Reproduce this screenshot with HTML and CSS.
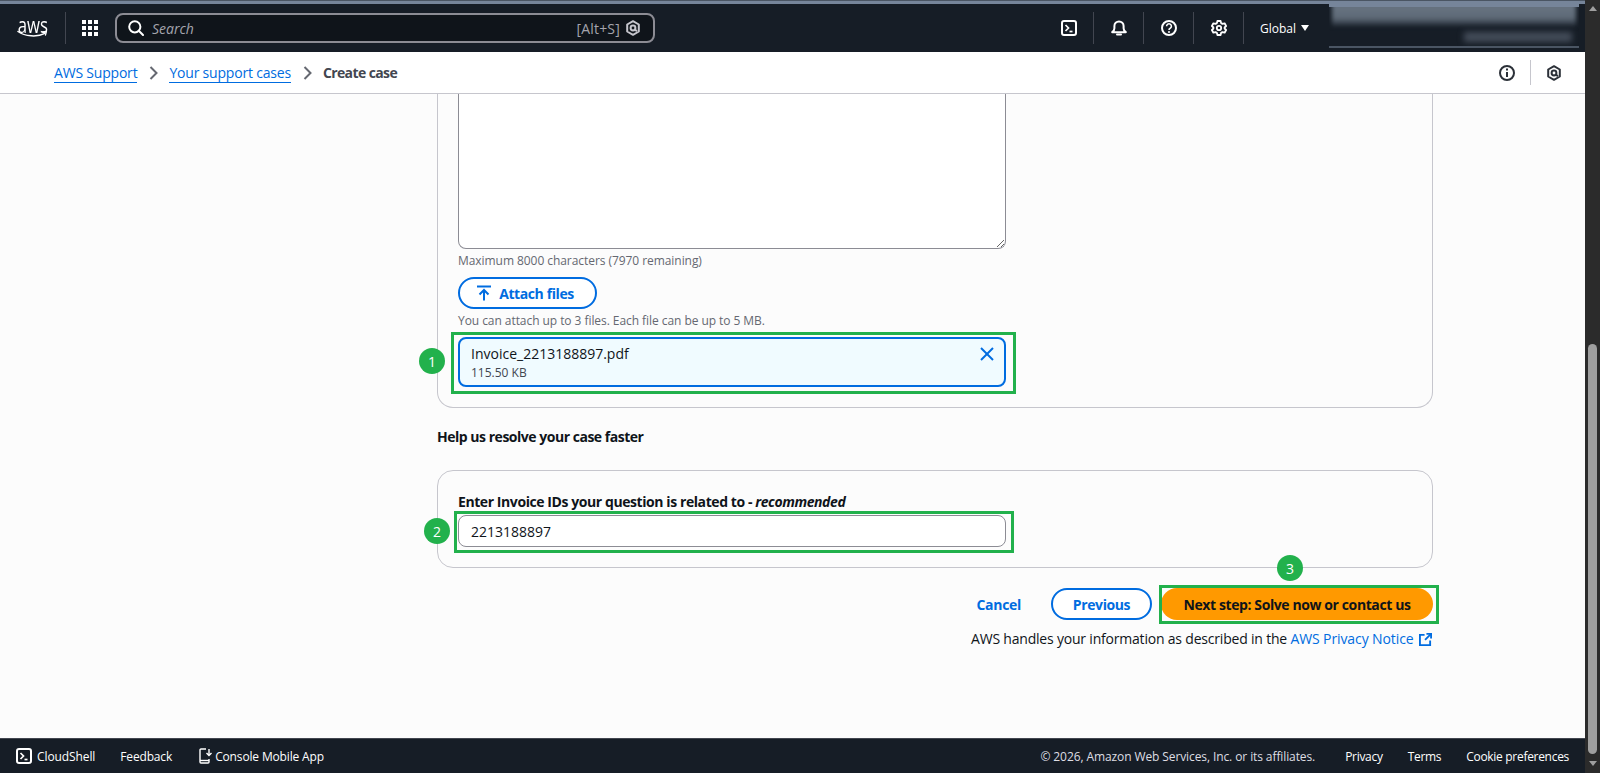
FILE: index.html
```html
<!DOCTYPE html>
<html lang="en">

<head>
    <meta charset="UTF-8">
    <meta name="viewport" content="width=device-width, initial-scale=1.0">
    <title>Create case</title>
    <link rel="stylesheet" href="styles.css">
</head>

<body>
    <div class="window">
        <div class="page">
            <div class="strip"></div>

            <header class="nav">
                <div class="logo">
                    <span class="logo-text">aws</span>
                    <svg class="logo-smile" width="32" height="9" viewBox="0 0 32 9" fill="none">
                        <path d="M1 1.5C8 6.5 20 7.5 28 3.4" stroke="#fff" stroke-width="1.5" stroke-linecap="round"/>
                        <path d="M25.5 1.8l4-.4-1 3.8" stroke="#fff" stroke-width="1.2" stroke-linecap="round" stroke-linejoin="round"/>
                    </svg>
                </div>
                <span class="nav-sep first"></span>
                <svg class="apps" width="16" height="16" viewBox="0 0 16 16" fill="#fff">
                    <rect x="0" y="0" width="4" height="4"/><rect x="6" y="0" width="4" height="4"/><rect x="12" y="0" width="4" height="4"/>
                    <rect x="0" y="6" width="4" height="4"/><rect x="6" y="6" width="4" height="4"/><rect x="12" y="6" width="4" height="4"/>
                    <rect x="0" y="12" width="4" height="4"/><rect x="6" y="12" width="4" height="4"/><rect x="12" y="12" width="4" height="4"/>
                </svg>
                <div class="search">
                    <svg width="16" height="16" viewBox="0 0 16 16" fill="none" stroke="#fff" stroke-width="2">
                        <circle cx="6.8" cy="6.8" r="5.6"/><path d="M10.8 10.8L15 15" stroke-linecap="round"/>
                    </svg>
                    <span class="search-text">Search</span>
                    <span class="search-key">[Alt+S]</span>
                    <svg width="14" height="16" viewBox="0 0 14 16" fill="none" stroke="#c6c6cd" stroke-width="2">
                        <path d="M7 1.2l5.8 3.3v7L7 14.8l-5.8-3.3v-7z" stroke-linejoin="round"/>
                        <circle cx="7" cy="8" r="2.4"/><path d="M8.5 9.5l2.5 1.7"/>
                    </svg>
                </div>
                <div class="nav-tools">
                    <span class="tool">
                        <svg width="16" height="16" viewBox="0 0 16 16" fill="none" stroke="#fff" stroke-width="2">
                            <rect x="1" y="1" width="14" height="14" rx="2"/><path d="M4.5 5l3 3-3 3" stroke-width="1.7"/><path d="M8.5 11.5h3" stroke-width="1.7"/>
                        </svg>
                    </span>
                    <span class="nav-sep"></span>
                    <span class="tool">
                        <svg width="16" height="16" viewBox="0 0 16 16" fill="none" stroke="#fff" stroke-width="2" stroke-linejoin="round">
                            <path d="M1.2 12.2c1.5-1 2.2-2 2.2-4V6a4.6 4.6 0 0 1 9.2 0v2.2c0 2 .7 3 2.2 4z"/><path d="M6 14.6h4" stroke-linecap="round"/>
                        </svg>
                    </span>
                    <span class="nav-sep"></span>
                    <span class="tool">
                        <svg width="16" height="16" viewBox="0 0 16 16" fill="none" stroke="#fff" stroke-width="2">
                            <circle cx="8" cy="8" r="7"/><path d="M5.6 6.2a2.4 2.4 0 1 1 3.6 2.1c-.8.4-1.2.9-1.2 1.7" stroke-width="1.6"/><circle cx="8" cy="12" r=".7" stroke-width="1"/>
                        </svg>
                    </span>
                    <span class="nav-sep"></span>
                    <span class="tool">
                        <svg width="16" height="16" viewBox="0 0 16 16" fill="none" stroke="#fff" stroke-width="1.8" stroke-linejoin="round">
                            <path d="M6.4 1h3.2l.5 2.1 1.4.8 2.1-.6 1.5 2.7-1.5 1.5v1l1.5 1.5-1.5 2.7-2.1-.6-1.4.8-.5 2.1H6.4l-.5-2.1-1.4-.8-2.1.6-1.5-2.7 1.5-1.5v-1L.9 6l1.5-2.7 2.1.6 1.4-.8z"/><circle cx="8" cy="8" r="2.2"/>
                        </svg>
                    </span>
                    <span class="nav-sep"></span>
                    <span class="region">Global</span>
                    <span class="caret"></span>
                </div>
                <div class="account">
                    <div class="account-name"></div>
                    <div class="account-sub"></div>
                </div>
            </header>

            <div class="crumbs">
                <a class="crumb" href="#">AWS Support</a>
                <svg class="chev" width="10" height="16" viewBox="0 0 10 16" fill="none" stroke="#656871" stroke-width="2"><path d="M1.5 2l6 6-6 6"/></svg>
                <a class="crumb" href="#">Your support cases</a>
                <svg class="chev" width="10" height="16" viewBox="0 0 10 16" fill="none" stroke="#656871" stroke-width="2"><path d="M1.5 2l6 6-6 6"/></svg>
                <span class="crumb-now">Create case</span>
                <div class="crumb-tools">
                    <svg width="16" height="16" viewBox="0 0 16 16" fill="none" stroke="#2b3038" stroke-width="2">
                        <circle cx="8" cy="8" r="7"/><path d="M8 7v5"/><path d="M8 3.6v2"/>
                    </svg>
                    <span class="crumb-sep"></span>
                    <svg width="14" height="16" viewBox="0 0 14 16" fill="none" stroke="#2b3038" stroke-width="2">
                        <path d="M7 1.2l5.8 3.3v7L7 14.8l-5.8-3.3v-7z" stroke-linejoin="round"/>
                        <circle cx="7" cy="8" r="2.4"/><path d="M8.5 9.5l2.5 1.7"/>
                    </svg>
                </div>
            </div>

            <main class="content">
                <section class="card card-cut">
                    <textarea class="message" aria-label="Description"></textarea>
                    <p class="hint hint-count">Maximum 8000 characters (7970 remaining)</p>
                    <button class="btn btn-attach">
                        <svg width="14" height="16" viewBox="0 0 14 16" fill="none" stroke="#006ce0" stroke-width="2">
                            <path d="M0 1.5h14"/><path d="M7 15.5V5.5"/><path d="M2.5 9.5L7 5l4.5 4.5"/>
                        </svg>
                        Attach files
                    </button>
                    <p class="hint hint-files">You can attach up to 3 files. Each file can be up to 5 MB.</p>
                    <div class="callout">
                        <div class="token">
                            <div class="token-name">Invoice_2213188897.pdf</div>
                            <div class="token-size">115.50 KB</div>
                            <svg class="token-x" width="14" height="14" viewBox="0 0 14 14" fill="none" stroke="#006ce0" stroke-width="2">
                                <path d="M1 1l12 12"/><path d="M13 1L1 13"/>
                            </svg>
                        </div>
                        <span class="frame frame-file"></span>
                        <span class="badge badge-file">1</span>
                    </div>
                </section>

                <h2 class="section-title">Help us resolve your case faster</h2>

                <section class="card card-invoice">
                    <label class="field-label" for="invoice">Enter Invoice IDs your question is related to - <i>recommended</i></label>
                    <div class="callout">
                        <input class="field" id="invoice" type="text" value="2213188897">
                        <span class="frame frame-field"></span>
                        <span class="badge badge-field">2</span>
                    </div>
                </section>

                <div class="actions">
                    <a class="cancel" href="#">Cancel</a>
                    <button class="btn btn-prev">Previous</button>
                    <div class="callout">
                        <button class="btn btn-next">Next step: Solve now or contact us</button>
                        <span class="frame frame-next"></span>
                        <span class="badge badge-next">3</span>
                    </div>
                </div>
                <p class="privacy">AWS handles your information as described in the <a href="#">AWS Privacy Notice</a>
                    <svg class="ext" width="13" height="13" viewBox="0 0 14 14" fill="none" stroke="#006ce0" stroke-width="2">
                        <path d="M6 2H1v11h11V8"/><path d="M8 1h5v5"/><path d="M13 1L6.5 7.5"/>
                    </svg>
                </p>
            </main>

            <footer class="footer">
                <svg width="16" height="16" viewBox="0 0 16 16" fill="none" stroke="#fff" stroke-width="2">
                    <rect x="1" y="1" width="14" height="14" rx="2"/><path d="M4.5 5l3 3-3 3" stroke-width="1.7"/><path d="M8.5 11.5h3" stroke-width="1.7"/>
                </svg>
                <span class="foot-shell">CloudShell</span>
                <span class="foot-feedback">Feedback</span>
                <svg class="foot-phone" width="13" height="16" viewBox="0 0 13 16" fill="none" stroke="#fff" stroke-width="1.4">
                    <path d="M7 1H2a1 1 0 0 0-1 1v12a1 1 0 0 0 1 1h7a1 1 0 0 0 1-1v-3"/><path d="M1 12.5h9"/><path d="M10 1v6"/><path d="M7.5 5l2.5 2.5L12.5 5"/>
                </svg>
                <span class="foot-app">Console Mobile App</span>
                <span class="foot-copy">© 2026, Amazon Web Services, Inc. or its affiliates.</span>
                <span class="foot-link">Privacy</span>
                <span class="foot-link">Terms</span>
                <span class="foot-link">Cookie preferences</span>
            </footer>
        </div>

        <div class="scrollbar">
            <span class="arrow arrow-up"></span>
            <div class="track"><div class="thumb"></div></div>
            <span class="arrow arrow-down"></span>
        </div>
    </div>
</body>

</html>
```

FILE: styles.css
```css
* {
    box-sizing: border-box;
}

html,
body {
    height: 100%;
    margin: 0;
    overflow: hidden;
}

body {
    font-family: "Open Sans", "Liberation Sans", sans-serif;
    font-size: 14px;
    color: #0f141a;
}

a {
    color: #006ce0;
    text-decoration: none;
}

.window {
    display: flex;
    height: 773px;
}

.page {
    flex: 1;
    min-width: 0;
    display: flex;
    flex-direction: column;
}

.strip {
    height: 4px;
    background: #76859a;
    border-top: 1px solid #4a5563;
}

/* top nav */
.nav {
    height: 48px;
    display: flex;
    align-items: center;
    background: #161d26;
    color: #fff;
    padding-left: 17px;
}

.logo {
    width: 31px;
    height: 22px;
    display: flex;
    flex-direction: column;
    align-items: center;
    color: #fff;
}

.logo-text {
    display: block;
    font-size: 22px;
    line-height: 14px;
    transform: scaleX(0.76);
}

.logo-smile {
    margin-top: -1px;
}

.nav-sep {
    width: 1px;
    height: 32px;
    background: #424650;
}

.nav-sep.first {
    margin-left: 17px;
}

.apps {
    margin-left: 16px;
}

.search {
    width: 540px;
    height: 30px;
    margin-left: 17px;
    display: flex;
    align-items: center;
    padding: 0 13px 0 11px;
    background: #0f141a;
    border: 2px solid #8c8c94;
    border-radius: 8px;
}

.search-text {
    margin-left: 8px;
    font-style: italic;
    color: #a4a4ad;
}

.search-key {
    margin-left: auto;
    margin-right: 6px;
    letter-spacing: 0.2px;
    color: #a4a4ad;
}

.nav-tools {
    display: flex;
    align-items: center;
    margin-left: 406px;
}

.tool {
    width: 49px;
    height: 16px;
    display: flex;
    justify-content: center;
}

.tool:first-child {
    width: 32px;
    justify-content: flex-start;
}

.region {
    margin-left: 16px;
    font-size: 12px;
}

.caret {
    margin-left: 5px;
    border-left: 4px solid transparent;
    border-right: 4px solid transparent;
    border-top: 6px solid #fff;
}

.account {
    width: 250px;
    height: 44px;
    margin-left: 20px;
    align-self: flex-start;
    background: #161d26;
    border-top: 3px solid #76859a;
    border-bottom: 2px solid #4a5563;
    overflow: hidden;
}

.account-name {
    height: 23px;
    margin: -4px 3px 0;
    background: linear-gradient(#6a7684, #5e6a77 65%, #232b36);
    filter: blur(2px);
}

.account-sub {
    width: 108px;
    height: 10px;
    margin: 6px 7px 0 auto;
    background: #444d5a;
    filter: blur(3px);
}

/* breadcrumb bar */
.crumbs {
    height: 42px;
    display: flex;
    align-items: center;
    padding: 0 24px 0 54px;
    background: #fff;
    border-bottom: 1px solid #c6c6cd;
}

.crumb {
    line-height: 18px;
    letter-spacing: -0.2px;
    border-bottom: 1px solid #006ce0;
    margin-top: 1px;
}

.chev {
    margin: 0 10px 0 12px;
}

.crumb-now {
    font-weight: 700;
    letter-spacing: -0.6px;
    color: #424650;
}

.crumb-tools {
    margin-left: auto;
    display: flex;
    align-items: center;
}

.crumb-sep {
    width: 1px;
    height: 25px;
    margin: 0 16px 0 15px;
    background: #c6c6cd;
}

/* form */
.content {
    flex: 1;
    min-height: 0;
    overflow: hidden;
    padding: 0 152px 0 437px;
    background: #fcfcfc;
}

.card {
    border: 1px solid #c6c6cd;
    border-radius: 16px;
    padding: 0 20px;
}

.card .callout {
    width: 548px;
}

.card-cut {
    height: 314px;
    border-top: 0;
    border-top-left-radius: 0;
    border-top-right-radius: 0;
}

.message {
    display: block;
    width: 548px;
    height: 155px;
    background: #fff;
    border: 1px solid #8c8c94;
    border-top: 0;
    border-radius: 0 0 8px 8px;
}

.hint {
    margin: 0;
    font-size: 12px;
    line-height: 16px;
    letter-spacing: -0.06px;
    color: #656871;
}

.hint-count {
    margin-top: 4px;
}

.hint-files {
    margin-top: 4px;
}

.btn {
    font-family: inherit;
    font-size: 14px;
    font-weight: 700;
    letter-spacing: -0.4px;
    border-radius: 20px;
    height: 32px;
    cursor: pointer;
}

.btn-attach {
    width: 139px;
    margin-top: 8px;
    display: flex;
    align-items: center;
    justify-content: center;
    gap: 8px;
    padding: 0 4px 0 0;
    color: #006ce0;
    background: #fff;
    border: 2px solid #006ce0;
}

.callout {
    position: relative;
}

.card-cut .callout {
    margin-top: 8px;
}

.token {
    position: relative;
    height: 50px;
    padding: 3px 11px;
    background: #f0fbff;
    border: 2px solid #006ce0;
    border-radius: 8px;
}

.token-name {
    line-height: 23px;
}

.token-size {
    font-size: 12px;
    line-height: 16px;
    color: #424650;
}

.token-x {
    position: absolute;
    top: 8px;
    right: 10px;
}

.frame {
    position: absolute;
    border: 3px solid #22b14c;
    pointer-events: none;
}

.frame-file {
    inset: -5px -10px -7px -7px;
}

.frame-field {
    inset: -4px -8px -6px -4px;
}

.frame-next {
    inset: -3px -6px -4px -2px;
}

.badge {
    position: absolute;
    width: 26px;
    height: 26px;
    border-radius: 50%;
    display: flex;
    align-items: center;
    justify-content: center;
    background: #22b14c;
    color: #fff;
    font-size: 14px;
}

.badge-file {
    left: -39px;
    top: 11px;
}

.badge-field {
    left: -34px;
    top: 3px;
}

.badge-next {
    left: 116px;
    top: -33px;
}

.section-title {
    margin: 20px 0 0;
    font-size: 14px;
    line-height: 18px;
    letter-spacing: -0.48px;
}

.card-invoice {
    height: 98px;
    margin-top: 24px;
    padding-top: 21px;
}

.field-label {
    display: block;
    font-weight: 700;
    line-height: 20px;
    letter-spacing: -0.42px;
    margin-bottom: 3px;
}

.field {
    display: block;
    width: 548px;
    height: 32px;
    padding: 0 12px;
    font-family: inherit;
    font-size: 14px;
    color: #0f141a;
    background: #fff;
    border: 1px solid #8c8c94;
    border-radius: 8px;
}

.actions {
    display: flex;
    align-items: center;
    justify-content: flex-end;
    margin-top: 20px;
}

.cancel {
    font-weight: 700;
    letter-spacing: -0.3px;
    margin-right: 30px;
}

.btn-prev {
    width: 101px;
    margin-right: 9px;
    color: #006ce0;
    background: #fff;
    border: 2px solid #006ce0;
}

.btn-next {
    display: block;
    width: 272px;
    color: #0f141a;
    background: #ff9900;
    border: 0;
}

.privacy {
    margin: 9px 0 0;
    text-align: right;
    line-height: 20px;
    letter-spacing: -0.2px;
}

.privacy a {
    letter-spacing: -0.1px;
}

.ext {
    vertical-align: -2px;
    margin: 0 1px 0 2px;
}

/* bottom bar */
.footer {
    height: 35px;
    display: flex;
    align-items: center;
    padding: 0 16px;
    background: #161d26;
    border-top: 1px solid #424650;
    color: #fff;
    font-size: 12px;
    letter-spacing: -0.15px;
}

.foot-shell {
    margin-left: 5px;
    letter-spacing: -0.1px;
}

.foot-feedback {
    margin-left: 25px;
}

.foot-phone {
    margin-left: 27px;
}

.foot-app {
    margin-left: 3px;
}

.foot-copy {
    margin-left: auto;
    margin-right: 5px;
    letter-spacing: -0.1px;
    color: #dedee3;
}

.foot-link {
    margin-left: 25px;
    letter-spacing: -0.3px;
}

/* fake browser scrollbar */
.scrollbar {
    width: 15px;
    display: flex;
    flex-direction: column;
    align-items: center;
    background: #2b2b2b;
}

.arrow {
    width: 0;
    height: 0;
    border-left: 4px solid transparent;
    border-right: 4px solid transparent;
}

.arrow-up {
    margin-top: 6px;
    border-bottom: 5px solid #9f9f9f;
}

.arrow-down {
    margin-bottom: 7px;
    border-top: 5px solid #9f9f9f;
}

.track {
    flex: 1;
    display: flex;
    align-items: flex-end;
    padding-bottom: 7px;
}

.thumb {
    width: 9px;
    height: 410px;
    background: #9f9f9f;
    border-radius: 5px;
}
```
